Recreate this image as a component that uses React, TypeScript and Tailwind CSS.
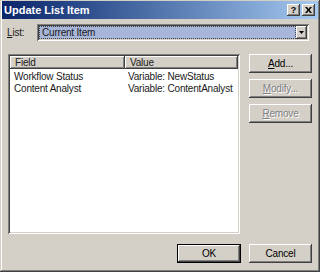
import React from "react";

const raised =
  "shadow-[inset_-1px_-1px_0_#404040,inset_1px_1px_0_#ffffff,inset_-2px_-2px_0_#808080,inset_2px_2px_0_#d4d0c8]";
const sunken =
  "shadow-[inset_1px_1px_0_#808080,inset_-1px_-1px_0_#ffffff,inset_2px_2px_0_#404040,inset_-2px_-2px_0_#d4d0c8]";

interface BtnProps {
  label: React.ReactNode;
  disabled?: boolean;
  isDefault?: boolean;
  className?: string;
}

const Btn: React.FC<BtnProps> = ({ label, disabled = false, isDefault = false, className = "" }) => {
  if (isDefault) {
    return (
      <div className={`border border-black bg-[#d4d0c8] ${className}`}>
        <div className={`h-full w-full flex items-center justify-center text-black ${raised}`}>
          {label}
        </div>
      </div>
    );
  }
  return (
    <div
      className={`bg-[#d4d0c8] flex items-center justify-center ${raised} ${
        disabled ? "text-[#808080] [text-shadow:1px_1px_0_#ffffff]" : "text-black"
      } ${className}`}
    >
      {label}
    </div>
  );
};

const rows = [
  { field: "Workflow Status", value: "Variable: NewStatus" },
  { field: "Content Analyst", value: "Variable: ContentAnalyst" },
];

export default function App() {
  return (
    <div
      className="w-[320px] h-[272px] bg-[#d4d0c8] flex flex-col overflow-hidden text-[10px] tracking-[-0.2px] leading-none text-[#1a1a1a] shadow-[inset_-1px_-1px_0_#404040,inset_1px_1px_0_#d4d0c8,inset_-2px_-2px_0_#808080,inset_2px_2px_0_#ffffff]"
      style={{ fontFamily: '"Liberation Sans", Arial, sans-serif' }}
    >
      {/* title bar */}
      <div className="h-[18px] mx-[2px] mt-[1px] flex items-center bg-gradient-to-r from-[#0a246a] to-[#a6caf0] pl-[2px] pr-[3px]">
        <span className="text-white font-bold text-[11px] tracking-normal flex-1">Update List Item</span>
        <div className="flex gap-[2px]">
          <div className={`w-[13px] h-[12px] bg-[#d4d0c8] flex items-center justify-center text-[9px] font-bold text-black ${raised}`}>
            ?
          </div>
          <div className={`w-[13px] h-[12px] bg-[#d4d0c8] flex items-center justify-center ${raised}`}>
            <svg width="7" height="6" viewBox="0 0 7 6">
              <path d="M0 0h2l1.5 2L5 0h2L4.5 3 7 6H5L3.5 4 2 6H0l2.5-3z" fill="#000" />
            </svg>
          </div>
        </div>
      </div>

      {/* list selector */}
      <div className="flex items-center pl-[7px] pr-[11px] mt-[5px] h-[17px]">
        <span className="w-[30px]">
          <span className="underline">L</span>ist:
        </span>
        <div className={`flex-1 h-full bg-white flex items-center p-[2px] ${sunken}`}>
          <div className="flex-1 h-full bg-[#a6b5d8] border border-dotted border-[#404040] flex items-center pl-[2px]">
            Current Item
          </div>
          <div className={`w-[11px] h-full bg-[#d4d0c8] flex items-center justify-center ${raised}`}>
            <svg width="5" height="3" viewBox="0 0 5 3">
              <path d="M0 0h5L2.5 3z" fill="#000" />
            </svg>
          </div>
        </div>
      </div>

      {/* list view + side buttons */}
      <div className="flex pl-[8px] pr-[8px] mt-[13px] gap-[9px]">
        <div className={`w-[232px] h-[180px] bg-white p-[2px] ${sunken}`}>
          <div className="flex h-[13px]">
            <div className={`w-[115px] bg-[#d4d0c8] flex items-center pl-[5px] ${raised}`}>Field</div>
            <div className={`flex-1 bg-[#d4d0c8] flex items-center pl-[5px] ${raised}`}>Value</div>
          </div>
          <div className="flex flex-col pt-[2px]">
            {rows.map((r) => (
              <div key={r.field} className="flex h-[12px] items-center">
                <span className="w-[115px] pl-[4px]">{r.field}</span>
                <span className="pl-[3px]">{r.value}</span>
              </div>
            ))}
          </div>
        </div>
        <div className="flex flex-col gap-[6px]">
          <Btn className="w-[63px] h-[19px]" label={<span><span className="underline">A</span>dd...</span>} />
          <Btn className="w-[63px] h-[19px]" disabled label={<span><span className="underline">M</span>odify...</span>} />
          <Btn className="w-[63px] h-[19px]" disabled label={<span><span className="underline">R</span>emove</span>} />
        </div>
      </div>

      {/* footer */}
      <div className="flex justify-end gap-[8px] pr-[8px] mt-[10px]">
        <Btn className="w-[64px] h-[19px]" isDefault label="OK" />
        <Btn className="w-[63px] h-[19px]" label="Cancel" />
      </div>
    </div>
  );
}
